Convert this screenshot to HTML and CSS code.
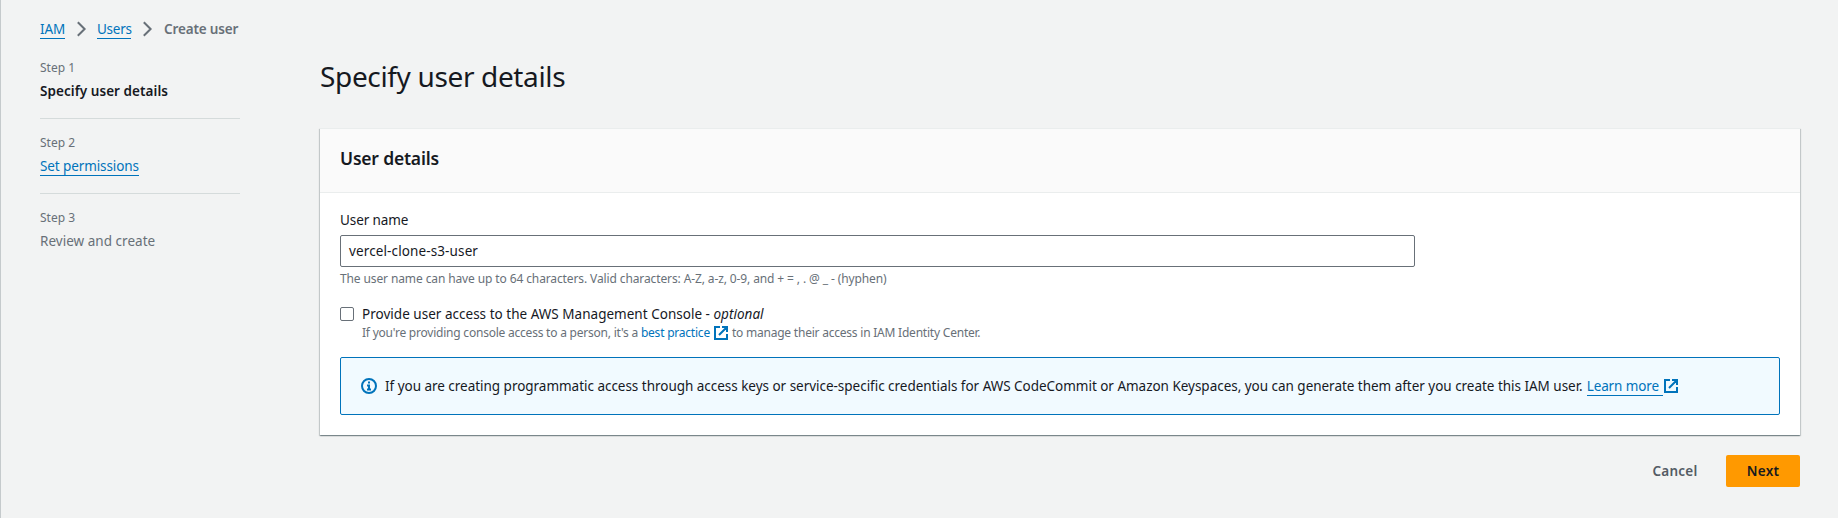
FILE: index.html
```html
<!DOCTYPE html>
<html lang="en">
<head>
<meta charset="utf-8">
<title>Create user</title>
<link rel="stylesheet" href="styles.css">
</head>
<body>
<div class="page">
  <nav class="breadcrumbs">
    <a class="link t-iam">IAM</a>
    <svg class="chevron" width="10" height="16" viewBox="0 0 10 16"><path d="M.8 1.2 7.6 8l-6.8 6.8"/></svg>
    <a class="link t-users">Users</a>
    <svg class="chevron chevron-last" width="10" height="16" viewBox="0 0 10 16"><path d="M.8 1.2 7.6 8l-6.8 6.8"/></svg>
    <span class="crumb-current">Create user</span>
  </nav>
  <div class="columns">
    <aside class="steps">
      <div class="step"><div class="step-label">Step 1</div><div class="step-name active"><span>Specify user details</span></div></div>
      <div class="step"><div class="step-label">Step 2</div><div class="step-name"><a class="link t-set">Set permissions</a></div></div>
      <div class="step"><div class="step-label">Step 3</div><div class="step-name muted"><span>Review and create</span></div></div>
    </aside>
    <main class="main">
      <h1 class="title"><span>Specify user details</span></h1>
      <section class="card">
        <header class="card-header"><h2><span>User details</span></h2></header>
        <div class="card-body">
          <div class="label"><span>User name</span></div>
          <div class="input"><span>vercel-clone-s3-user</span></div>
          <div class="hint"><span>The user name can have up to 64 characters. Valid characters: A-Z, a-z, 0-9, and + = , . @ _ - (hyphen)</span></div>
          <div class="check-row">
            <span class="checkbox"></span>
            <div class="check-content">
              <div class="check-label"><span>Provide user access to the AWS Management Console - </span><em>optional</em></div>
              <div class="check-desc">
                <span class="d1">If you're providing console access to a person, it's a <a class="plain-link">best practice</a></span>
                <svg class="ext" width="14" height="14" viewBox="0 0 14 14"><path d="M6 1H1v12h12V8M8 1h5v5M13 1 5 9"/></svg>
                <span class="d2">to manage their access in IAM Identity Center.</span>
              </div>
            </div>
          </div>
          <div class="alert">
            <svg class="info" width="16" height="16" viewBox="0 0 16 16"><circle cx="8" cy="8" r="7"/><path d="M7 4.5h2M6 7.5h2v4M6 11.5h4"/></svg>
            <span class="alert-text">If you are creating programmatic access through access keys or service-specific credentials for AWS CodeCommit or Amazon Keyspaces, you can generate them after you create this IAM user.</span>
            <a class="link t-learn">Learn more</a>
            <svg class="ext ext-alert" width="14" height="14" viewBox="0 0 14 14"><path d="M6 1H1v12h12V8M8 1h5v5M13 1 5 9"/></svg>
          </div>
        </div>
      </section>
      <footer class="actions">
        <button class="btn cancel"><span>Cancel</span></button>
        <button class="btn next"><span>Next</span></button>
      </footer>
    </main>
  </div>
</div>
</body>
</html>
```
FILE: styles.css
```css
* { box-sizing: border-box; }
body { margin: 0; background: #f2f3f3; font: 13.5px/22px "Noto Sans", "Open Sans", sans-serif; color: #16191f; white-space: nowrap; }
.page { height: 518px; border-left: 1px solid #c5cacc; padding: 18px 38px 0 39px; overflow: hidden; }
.breadcrumbs { display: flex; align-items: center; height: 22px; }
.link { color: #0073bb; border-bottom: 1px solid #0073bb; line-height: 18px; height: 19px; display: inline-block; letter-spacing: -.1px; }
.t-iam { width: 25px; }
.t-users { width: 34px; letter-spacing: -.25px; }
.chevron { fill: none; stroke: #687078; stroke-width: 2; margin: 0 10px 0 12px; }
.chevron-last { margin-right: 11px; }
.crumb-current { font-weight: 600; color: #687078; letter-spacing: -.15px; }
.columns { display: flex; }
.steps { width: 200px; margin: 17px 80px 0 0; }
.step { height: 75px; }
.step-label { font-size: 12px; color: #687078; line-height: 22px; }
.step-name { height: 40px; line-height: 24px; }
.step:not(:last-child) .step-name { border-bottom: 1px solid #d5dbdb; }
.active { font-weight: 600; letter-spacing: .06px; }
.muted { color: #687078; letter-spacing: .03px; }
.main { flex: 1; min-width: 0; }
.title { margin: 18px 0 34px; font-size: 28px; line-height: 36px; font-weight: 400; letter-spacing: -.35px; }
.card { height: 307px; background: #fff; box-shadow: 0 1px 1px 0 rgba(0,28,36,.3), 1px 1px 1px 0 rgba(0,28,36,.15), -1px 1px 1px 0 rgba(0,28,36,.15); border-top: 1px solid #eaeded; }
.card-header { height: 64px; background: #fafafa; border-bottom: 1px solid #eaeded; padding: 18px 20px; }
.card-header h2 { margin: 0; font-size: 17.5px; line-height: 22px; font-weight: 600; letter-spacing: -.19px; }
.card-body { padding: 16px 20px 20px; }
.label { height: 26px; letter-spacing: -.1px; }
.input { width: 1075px; height: 32px; border: 1px solid #687078; border-radius: 2px; padding: 0 8px; line-height: 30px; letter-spacing: .12px; }
.hint { font-size: 12px; color: #687078; height: 35px; line-height: 24px; letter-spacing: -.115px; }
.check-row { display: flex; gap: 8px; height: 55px; }
.checkbox { width: 14px; height: 14px; border: 1px solid #687078; border-radius: 2px; margin-top: 5px; }
.check-label { height: 22px; line-height: 24px; display: flex; white-space: pre; letter-spacing: .02px; }
.check-desc { display: flex; align-items: center; height: 18px; font-size: 12px; color: #687078; letter-spacing: -.22px; }
.plain-link { color: #0073bb; }
.ext { fill: none; stroke: #0073bb; stroke-width: 2; margin: 0 4px; }
.alert { height: 58px; border: 1px solid #0073bb; border-radius: 2px; background: #f1faff; display: flex; align-items: center; padding-left: 20px; }
.info { fill: none; stroke: #0073bb; stroke-width: 2; margin-right: 8px; }
.alert-text { letter-spacing: -.026px; }
.t-learn { margin-left: 4px; width: 76px; }
.ext-alert { margin-left: 1px; }
.actions { display: flex; justify-content: flex-end; padding-top: 20px; }
.btn { border: 0; background: none; font: 600 13.5px/20px "Noto Sans", sans-serif; height: 32px; padding: 0; border-radius: 2px; letter-spacing: .25px; }
.cancel { width: 86px; color: #545b64; margin-right: 8px; }
.next { width: 74px; background: #ff9900; color: #16191f; }
```
